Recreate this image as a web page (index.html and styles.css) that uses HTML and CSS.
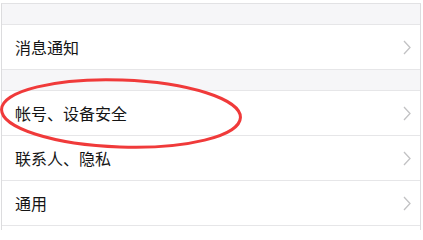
FILE: index.html
```html
<!DOCTYPE html>
<html lang="zh">
<head>
<meta charset="utf-8">
<link rel="stylesheet" href="styles.css">
</head>
<body>
<div class="frame">
  <div class="band"></div>
  <div class="group">
    <div class="row"><span class="label">消息通知</span><svg class="chev" width="8" height="15" viewBox="0 0 8 15"><polyline points="1,1 7,7.5 1,14"/></svg></div>
  </div>
  <div class="band"></div>
  <div class="group">
    <div class="row"><span class="label">帐号、设备安全</span><svg class="chev" width="8" height="15" viewBox="0 0 8 15"><polyline points="1,1 7,7.5 1,14"/></svg></div>
    <div class="row"><span class="label">联系人、隐私</span><svg class="chev" width="8" height="15" viewBox="0 0 8 15"><polyline points="1,1 7,7.5 1,14"/></svg></div>
    <div class="row"><span class="label">通用</span><svg class="chev" width="8" height="15" viewBox="0 0 8 15"><polyline points="1,1 7,7.5 1,14"/></svg></div>
  </div>
</div>
<svg class="mark" width="423" height="230" viewBox="0 0 423 230">
  <ellipse cx="121" cy="113.5" rx="119.5" ry="33.5" transform="rotate(2 121 113.5)"/>
</svg>
</body>
</html>
```
FILE: styles.css
```css
html, body {
  margin: 0;
  padding: 0;
  background: #ffffff;
}
body {
  width: 423px;
  height: 230px;
  overflow: hidden;
  position: relative;
  font-family: "Noto Sans CJK SC", "Noto Sans", sans-serif;
}
.frame {
  margin: 3px 0 0 1px;
  width: 418px;
  border-top: 1px solid #e2e2e4;
  border-left: 1px solid #dcdcde;
  border-right: 1px solid #dcdcde;
  height: 227px;
}
.band {
  height: 20px;
  background: #f6f6f8;
}
.group {
  border-top: 1px solid #e6e6e8;
}
.row {
  box-sizing: border-box;
  height: 45px;
  border-bottom: 1px solid #e6e6e8;
  display: flex;
  align-items: center;
  justify-content: space-between;
  padding: 0 9px 0 13px;
}
.group:first-of-type .row {
  height: 44px;
}
.label {
  font-size: 16px;
  color: #151515;
  line-height: 1;
}
.chev polyline {
  fill: none;
  stroke: #c2c2c4;
  stroke-width: 1.3;
}
.mark {
  position: absolute;
  left: 0;
  top: 0;
  pointer-events: none;
}
.mark ellipse {
  fill: none;
  stroke: #f03a3a;
  stroke-width: 3;
}
```
